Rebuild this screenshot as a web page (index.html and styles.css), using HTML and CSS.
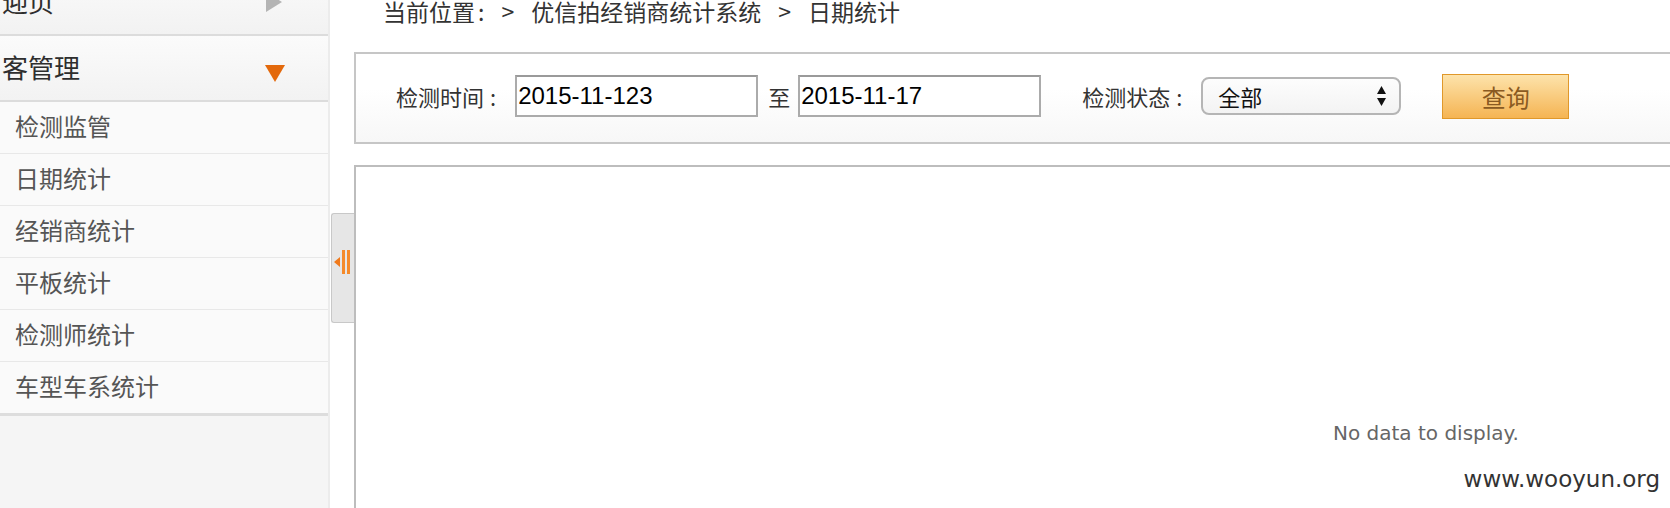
FILE: index.html
```html
<!DOCTYPE html>
<html lang="zh-CN">
<head>
<meta charset="utf-8">
<title>日期统计</title>
<link rel="stylesheet" href="styles.css">
</head>
<body>
<div class="page">
  <aside class="sidebar">
    <div class="menu-head">
      <span class="menu-title">迎页</span>
      <i class="tri-right"></i>
    </div>
    <div class="menu-head">
      <span class="menu-title">客管理</span>
      <i class="tri-down"></i>
    </div>
    <ul class="menu-items">
      <li>检测监管</li>
      <li>日期统计</li>
      <li>经销商统计</li>
      <li>平板统计</li>
      <li>检测师统计</li>
      <li>车型车系统计</li>
    </ul>
  </aside>
  <div class="splitter">
    <div class="split-tab">
      <svg width="22" height="108" viewBox="0 0 22 108">
        <polygon points="2,48 8,43 8,53" fill="#f07a1c"/>
        <rect x="10" y="36" width="3" height="24" fill="#f58a2a"/>
        <rect x="15" y="36" width="3" height="24" fill="#f58a2a"/>
      </svg>
    </div>
  </div>
  <main class="main">
    <div class="crumb">当前位置<span class="colon">:</span><span class="sep">&gt;</span>优信拍经销商统计系统<span class="sep">&gt;</span>日期统计</div>
    <div class="filter">
      <span class="label">检测时间<span class="colon">:</span></span>
      <input class="date" type="text" value="2015-11-123">
      <span class="to">至</span>
      <input class="date" type="text" value="2015-11-17">
      <span class="label status-label">检测状态<span class="colon">:</span></span>
      <div class="select">
        <span class="select-text">全部</span>
        <svg class="select-arrows" width="11" height="22" viewBox="0 0 11 22">
          <polygon points="5.5,1 10,9 1,9" fill="#111"/>
          <polygon points="5.5,21 10,13 1,13" fill="#111"/>
        </svg>
      </div>
      <button class="btn" type="button">查询</button>
    </div>
    <section class="grid">
      <p class="empty">No data to display.</p>
    </section>
  </main>
</div>
<div class="watermark">www.wooyun.org</div>
</body>
</html>
```
FILE: styles.css
```css
html, body {
  margin: 0;
  padding: 0;
  background: #fff;
}
body {
  width: 1670px;
  height: 508px;
  overflow: hidden;
  position: relative;
  font-family: "Noto Sans CJK SC", "Liberation Sans", sans-serif;
  color: #333;
}
.page {
  display: flex;
  height: 508px;
}
.sidebar {
  width: 328px;
  flex: none;
  margin-top: -30px;
  height: 538px;
  background: #f5f5f5;
  border-right: 2px solid #ececec;
}
.menu-head {
  height: 64px;
  border-bottom: 2px solid #dcdcdc;
  background: linear-gradient(#fbfbfb, #f2f2f2);
  display: flex;
  align-items: center;
  justify-content: space-between;
  padding: 0 43px 0 2px;
}
.menu-title {
  font-size: 26px;
  line-height: 30px;
  color: #2e2e2e;
  padding-bottom: 3px;
}
.tri-right {
  width: 0;
  height: 0;
  border-top: 10px solid transparent;
  border-bottom: 10px solid transparent;
  border-left: 16px solid #b4b4b4;
  margin-right: 3px;
}
.tri-down {
  width: 0;
  height: 0;
  border-left: 10px solid transparent;
  border-right: 10px solid transparent;
  border-top: 17px solid #e3690c;
  margin-top: 10px;
}
.menu-items {
  list-style: none;
  margin: 0;
  padding: 0;
  border-bottom: 3px solid #dddddd;
  background: #fafafa;
}
.menu-items li {
  box-sizing: border-box;
  height: 52px;
  border-bottom: 1px solid #e8e8e8;
  display: flex;
  align-items: center;
  padding: 0 0 4px 15px;
  font-size: 24px;
  color: #555;
}
.menu-items li:last-child {
  border-bottom: none;
  height: 51px;
}
.splitter {
  width: 24px;
  flex: none;
  background: #fff;
}
.split-tab {
  margin-top: 213px;
  margin-left: 1px;
  width: 22px;
  height: 108px;
  border: 1px solid #c8c8c8;
  border-right: none;
  border-radius: 3px 0 0 3px;
  background: #e6e6e6;
}
.split-tab svg {
  display: block;
}
.main {
  flex: 1;
  min-width: 0;
  overflow: hidden;
}
.crumb {
  height: 52px;
  padding-left: 29px;
  font-size: 23px;
  line-height: 22px;
  color: #333;
  white-space: nowrap;
}
.crumb .colon {
  margin-left: 3px;
}
.sep {
  margin: 0 17px;
}
.filter {
  width: 1400px;
  height: 84px;
  border: 2px solid #c6c6c6;
  border-right: none;
  background: linear-gradient(#ffffff 40%, #f7f7f7);
  display: flex;
  align-items: center;
  padding: 0 0 4px 40px;
  white-space: nowrap;
}
.label {
  font-size: 22px;
  color: #333;
  margin-right: 19px;
}
.label .colon {
  margin-left: 6px;
}
.date {
  box-sizing: border-box;
  width: 243px;
  height: 42px;
  border: 2px solid #ababab;
  border-top-color: #9a9a9a;
  padding: 0 1px;
  margin: 0;
  font-family: "Liberation Sans", sans-serif;
  font-size: 24px;
  color: #000;
  background: #fff;
  outline: none;
}
.to {
  font-size: 22px;
  color: #333;
  margin: 0 8px 0 10px;
}
.status-label {
  margin-left: 41px;
}
.select {
  box-sizing: border-box;
  width: 200px;
  height: 38px;
  border: 2px solid #b5b5b5;
  border-radius: 8px;
  background: linear-gradient(#fdfdfd, #f3f3f3);
  display: flex;
  align-items: center;
  justify-content: space-between;
  padding: 0 12px 0 15px;
}
.select-text {
  font-size: 22px;
  color: #111;
}
.select-arrows {
  display: block;
}
.btn {
  box-sizing: border-box;
  margin-left: 41px;
  width: 127px;
  height: 45px;
  border: 1px solid #e0982a;
  background: linear-gradient(#fde3ab, #f5b453);
  font-family: "Noto Sans CJK SC", sans-serif;
  font-size: 24px;
  color: #8a5a22;
  padding: 0;
}
.grid {
  margin-top: 21px;
  width: 1400px;
  height: 400px;
  border-top: 2px solid #bdbdbd;
  border-left: 2px solid #bdbdbd;
  background: #fff;
}
.empty {
  margin: 0;
  padding: 254px 0 0 977px;
  font-family: "DejaVu Sans", Verdana, sans-serif;
  font-size: 20px;
  line-height: 24px;
  color: #666;
}
.watermark {
  position: absolute;
  right: 10px;
  bottom: 16px;
  font-family: "DejaVu Sans", Verdana, sans-serif;
  font-size: 23px;
  line-height: 26px;
  color: #333;
}
```
